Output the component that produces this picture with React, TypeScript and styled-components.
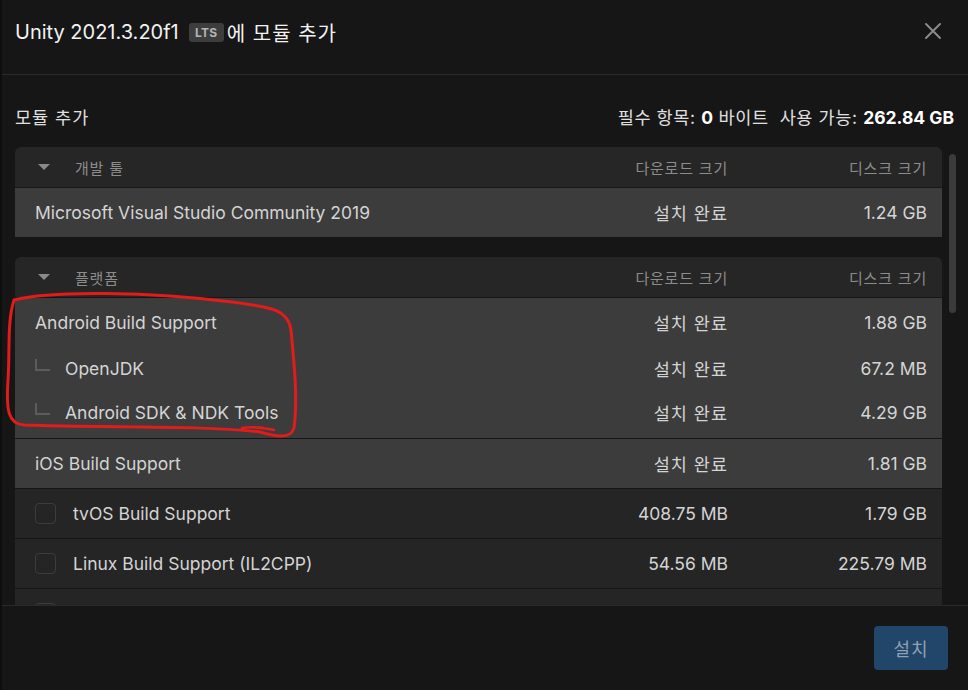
import React from "react";
import styled, { createGlobalStyle } from "styled-components";

const Global = createGlobalStyle`
  html, body { margin: 0; padding: 0; background: #161616; }
  body { font-family: Inter, "Noto Sans CJK KR", "Noto Sans", sans-serif; }
  * { box-sizing: border-box; }
`;

const Window = styled.div`
  position: relative;
  width: 968px;
  height: 690px;
  background: #161616;
  border-left: 2px solid #0e0e0e;
  display: flex;
  flex-direction: column;
  overflow: hidden;
  color: #d2d2d2;
`;

const Header = styled.div`
  height: 75px;
  flex: none;
  border-bottom: 1px solid #2a2a2a;
  display: flex;
  align-items: center;
  justify-content: space-between;
  padding: 0 26px 0 13px;
`;

const Title = styled.div`
  display: flex;
  align-items: center;
  font-size: 20px;
  color: #f2f2f2;
  margin-top: -10px;
`;

const Ko = styled.span<{ $ls?: number }>`
  letter-spacing: ${(p) => p.$ls ?? 1}px;
`;

const Badge = styled.span`
  display: inline-flex;
  align-items: center;
  justify-content: center;
  width: 35px;
  height: 19px;
  margin: 0 3px 0 10px;
  border-radius: 3px;
  background: #3d3d3d;
  color: #b4b4b4;
  font-size: 12px;
  font-weight: 700;
  letter-spacing: 0.3px;
`;

const CloseButton = styled.button`
  background: none;
  border: none;
  padding: 0;
  margin-top: -12px;
  width: 18px;
  height: 18px;
  display: flex;
  align-items: center;
  justify-content: center;
`;

const Body = styled.div`
  flex: 1;
  min-height: 0;
  display: flex;
  flex-direction: column;
  padding: 21px 0 0 13px;
`;

const SummaryRow = styled.div`
  height: 40px;
  margin-bottom: 11px;
  display: flex;
  align-items: center;
  justify-content: space-between;
  padding-right: 14px;
  font-size: 17.5px;
  color: #e0e0e0;
`;

const Strong = styled.b`
  color: #ffffff;
  font-weight: 700;
`;

const ListArea = styled.div`
  flex: 1;
  min-height: 0;
  display: flex;
`;

const ListScroll = styled.div`
  width: 927px;
  flex: none;
  overflow: hidden;
  display: flex;
  flex-direction: column;
  gap: 20px;
`;

const ScrollTrack = styled.div`
  flex: 1;
  padding: 7px 0 0 7px;
`;

const ScrollThumb = styled.div`
  width: 7px;
  height: 159px;
  border-radius: 4px;
  background: #3b3b3b;
`;

const Section = styled.div`
  display: flex;
  flex-direction: column;
  gap: 1px;
`;

const Cols = styled.div`
  display: grid;
  grid-template-columns: 1fr 200px 199px;
  align-items: center;
  padding-right: 15px;
`;

const SectionHeader = styled(Cols)`
  height: 40px;
  background: #262626;
  border-radius: 6px 6px 0 0;
  font-size: 15px;
  letter-spacing: 0.8px;
  color: #8c8c8c;
`;

const SectionTitle = styled.div`
  display: flex;
  align-items: center;
  padding-left: 23px;
`;

const Caret = styled.span`
  width: 0;
  height: 0;
  border-left: 6px solid transparent;
  border-right: 6px solid transparent;
  border-top: 6px solid #8a8a8a;
  margin-right: 25px;
`;

const Right = styled.div`
  text-align: right;
  white-space: nowrap;
`;

const Row = styled(Cols)<{ $installed?: boolean }>`
  height: 49px;
  background: ${(p) => (p.$installed ? "#3c3c3c" : "#252525")};
  font-size: 17.5px;
  color: #d4d4d4;
`;

const Group = styled.div`
  background: #3c3c3c;
  padding-bottom: 4px;
  display: flex;
  flex-direction: column;
`;

const SubRow = styled(Cols)<{ $h: number }>`
  height: ${(p) => p.$h}px;
  font-size: 17.5px;
  color: #d4d4d4;
`;

const Name = styled.div`
  display: flex;
  align-items: center;
  padding-left: 20px;
  white-space: nowrap;
`;

const Connector = styled.span`
  width: 15px;
  height: 12px;
  border-left: 2px solid #5c5c5c;
  border-bottom: 2px solid #5c5c5c;
  margin: 0 15px 0 0;
  transform: translateY(-4px);
`;

const Checkbox = styled.span`
  width: 21px;
  height: 21px;
  border: 1px solid #3c3c3c;
  border-radius: 4px;
  margin-right: 17px;
  flex: none;
`;

const Footer = styled.div`
  height: 85px;
  flex: none;
  border-top: 1px solid #2a2a2a;
  display: flex;
  justify-content: flex-end;
  align-items: flex-start;
  padding: 20px 20px 0 0;
`;

const InstallButton = styled.button`
  width: 74px;
  height: 44px;
  border: none;
  border-radius: 4px;
  background: #22466a;
  color: #8ea1b5;
  font-family: Inter, "Noto Sans CJK KR", sans-serif;
  font-size: 18px;
  letter-spacing: 1px;
`;

const Annotation = styled.svg`
  position: absolute;
  left: 0;
  top: 0;
  pointer-events: none;
`;

type Item = { name: string; dl: string; disk: string };

const INSTALLED = "설치 완료";

export default function App() {
  const platforms: Item[] = [
    { name: "tvOS Build Support", dl: "408.75 MB", disk: "1.79 GB" },
    { name: "Linux Build Support (IL2CPP)", dl: "54.56 MB", disk: "225.79 MB" },
  ];
  return (
    <>
      <Global />
      <Window>
        <Header>
          <Title>
            Unity 2021.3.20f1<Badge>LTS</Badge>
            <Ko>에 모듈 추가</Ko>
          </Title>
          <CloseButton aria-label="닫기">
            <svg width="18" height="18" viewBox="0 0 18 18">
              <path d="M2 2 L16 16 M16 2 L2 16" stroke="#8a8a8a" strokeWidth="2" strokeLinecap="round" />
            </svg>
          </CloseButton>
        </Header>
        <Body>
          <SummaryRow>
            <Ko>모듈 추가</Ko>
            <span>
              <Ko $ls={0.6}>필수 항목: </Ko>
              <Strong>0</Strong>
              <Ko $ls={0.6}> 바이트&nbsp;&nbsp;사용 가능: </Ko>
              <Strong>262.84 GB</Strong>
            </span>
          </SummaryRow>
          <ListArea>
            <ListScroll>
              <Section>
                <SectionHeader>
                  <SectionTitle>
                    <Caret />
                    개발 툴
                  </SectionTitle>
                  <Right>다운로드 크기</Right>
                  <Right>디스크 크기</Right>
                </SectionHeader>
                <Row $installed>
                  <Name>Microsoft Visual Studio Community 2019</Name>
                  <Right><Ko>{INSTALLED}</Ko></Right>
                  <Right>1.24 GB</Right>
                </Row>
              </Section>
              <Section>
                <SectionHeader>
                  <SectionTitle>
                    <Caret />
                    플랫폼
                  </SectionTitle>
                  <Right>다운로드 크기</Right>
                  <Right>디스크 크기</Right>
                </SectionHeader>
                <Group>
                  <SubRow $h={48}>
                    <Name>Android Build Support</Name>
                    <Right><Ko>{INSTALLED}</Ko></Right>
                    <Right>1.88 GB</Right>
                  </SubRow>
                  <SubRow $h={45}>
                    <Name>
                      <Connector />
                      OpenJDK
                    </Name>
                    <Right><Ko>{INSTALLED}</Ko></Right>
                    <Right>67.2 MB</Right>
                  </SubRow>
                  <SubRow $h={43}>
                    <Name>
                      <Connector />
                      Android SDK &amp; NDK Tools
                    </Name>
                    <Right><Ko>{INSTALLED}</Ko></Right>
                    <Right>4.29 GB</Right>
                  </SubRow>
                </Group>
                <Row $installed>
                  <Name>iOS Build Support</Name>
                  <Right><Ko>{INSTALLED}</Ko></Right>
                  <Right>1.81 GB</Right>
                </Row>
                {platforms.map((p) => (
                  <Row key={p.name}>
                    <Name>
                      <Checkbox />
                      {p.name}
                    </Name>
                    <Right>{p.dl}</Right>
                    <Right>{p.disk}</Right>
                  </Row>
                ))}
                <Row>
                  <Name>
                    <Checkbox />
                  </Name>
                </Row>
              </Section>
            </ListScroll>
            <ScrollTrack>
              <ScrollThumb />
            </ScrollTrack>
          </ListArea>
        </Body>
        <Footer>
          <InstallButton>설치</InstallButton>
        </Footer>
        <Annotation width="968" height="690" viewBox="0 0 968 690">
          <path
            d="M 12 300 C 50 290, 150 292, 230 302 C 268 307, 286 309, 289 330 C 292 362, 296 400, 292 428 C 289 440, 272 436, 258 432 C 200 425, 100 428, 22 425 C 6 424, 4 410, 6 380 C 8 350, 5 322, 12 300 Z"
            fill="none"
            stroke="#e21b1b"
            strokeWidth="3"
            strokeLinecap="round"
          />
          <path d="M 240 428 C 252 426, 262 428, 272 430" fill="none" stroke="#e21b1b" strokeWidth="2.5" strokeLinecap="round" />
        </Annotation>
      </Window>
    </>
  );
}
